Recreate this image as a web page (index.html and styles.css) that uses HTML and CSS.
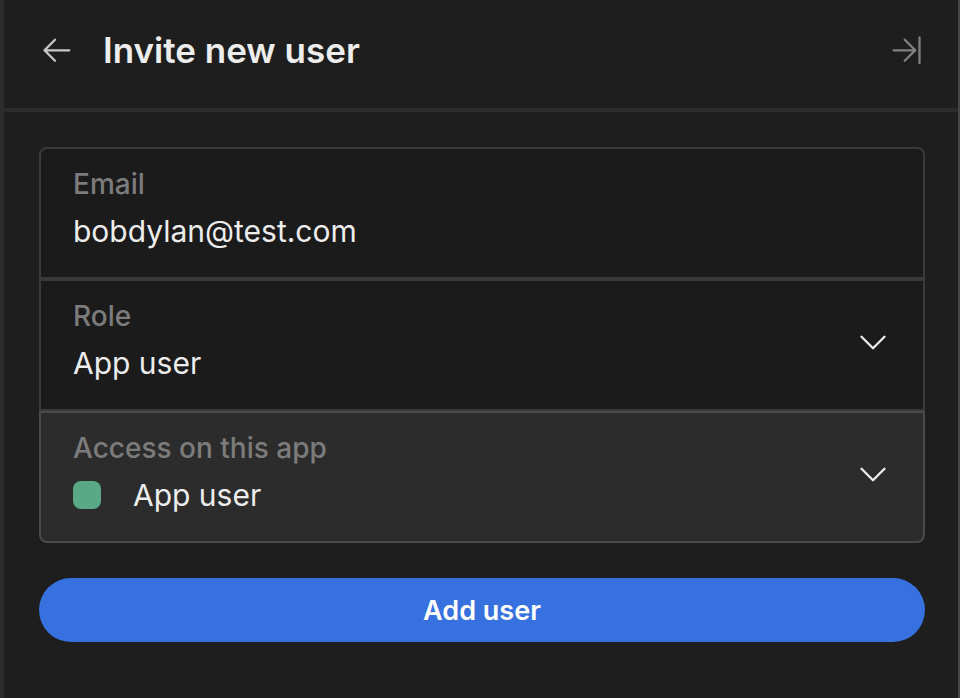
FILE: index.html
```html
<!DOCTYPE html>
<html lang="en">
<head>
    <meta charset="UTF-8">
    <meta name="viewport" content="width=device-width, initial-scale=1.0">
    <title>Invite new user</title>
    <link rel="stylesheet" href="styles.css">
</head>
<body>
    <header class="header">
        <button class="icon-button back" type="button" aria-label="Back">
            <svg width="32" height="32" viewBox="0 0 32 32">
                <path d="M28.3 16.3H3.5M14 5.8L3.5 16.3L14 26.8"/>
            </svg>
        </button>
        <h1>Invite new user</h1>
        <button class="icon-button collapse" type="button" aria-label="Close panel">
            <svg width="32" height="32" viewBox="0 0 32 32">
                <path d="M2.5 16.3H24.3M13.7 5.8L24.3 16.3L13.7 26.8M28.5 3.5V29"/>
            </svg>
        </button>
    </header>

    <form class="invite-form">
        <div class="fields">
            <div class="field">
                <label for="email">Email</label>
                <input type="email" id="email" value="bobdylan@test.com">
            </div>
            <div class="field">
                <label for="role">Role</label>
                <select id="role">
                    <option>App user</option>
                    <option>Creator</option>
                    <option>Admin</option>
                </select>
                <svg class="chevron" width="28" height="16" viewBox="0 0 28 16">
                    <path d="M2.5 1.7L14 13.2L25.5 1.7"/>
                </svg>
            </div>
            <div class="field active">
                <label for="access">Access on this app</label>
                <div class="access-row">
                    <span class="swatch"></span>
                    <select id="access">
                        <option>App user</option>
                        <option>No access</option>
                    </select>
                </div>
                <svg class="chevron" width="28" height="16" viewBox="0 0 28 16">
                    <path d="M2.5 1.7L14 13.2L25.5 1.7"/>
                </svg>
            </div>
        </div>
        <button class="submit" type="submit">Add user</button>
    </form>
</body>
</html>
```
FILE: styles.css
```css
* {
    box-sizing: border-box;
}
body {
    margin: 0;
    min-height: 100vh;
    background-color: #1e1e1e;
    border-left: 4px solid #2c2c2c;
    border-right: 2px solid #464646;
    color: #ededed;
    font-family: Inter, "Liberation Sans", sans-serif;
}
button, input, select {
    font-family: inherit;
}
.header {
    display: flex;
    align-items: center;
    padding: 28px 35px 36px;
    border-bottom: 4px solid #2c2c2c;
}
h1 {
    flex: 1;
    margin: 0 0 0 30px;
    font-size: 35px;
    font-weight: 600;
    line-height: 44px;
}
.icon-button {
    display: flex;
    padding: 0;
    border: none;
    background: none;
    cursor: pointer;
}
svg {
    fill: none;
    stroke: currentColor;
    stroke-width: 2.3;
    stroke-linecap: round;
    stroke-linejoin: round;
}
.back {
    margin-left: 2px;
    color: #c8c8c8;
}
.collapse {
    color: #808080;
}
.invite-form {
    padding: 35px 33px 35px 35px;
}
.field {
    position: relative;
    display: flex;
    flex-direction: column;
    gap: 11px;
    padding: 17px 32px 28px;
    background-color: #1b1b1b;
    border: 2px solid #3a3a3a;
}
.field:first-child {
    border-radius: 8px 8px 0 0;
}
.field:last-child {
    border-radius: 0 0 8px 8px;
}
.field.active {
    background-color: #2c2c2c;
    border-color: #4a4a4a;
}
.field label {
    color: #7c7c7c;
    font-size: 28px;
    font-weight: 500;
    line-height: 36px;
}
.field input, .field select {
    width: 100%;
    height: 36px;
    padding: 0;
    border: none;
    outline: none;
    background: none;
    color: #ededed;
    font-size: 30px;
    line-height: 36px;
    appearance: none;
}
.access-row {
    display: flex;
    align-items: center;
    gap: 32px;
}
.swatch {
    flex: none;
    width: 28px;
    height: 28px;
    border-radius: 8px;
    background-color: #5aa986;
}
.chevron {
    position: absolute;
    top: 54px;
    right: 36px;
    pointer-events: none;
}
.submit {
    display: block;
    width: 100%;
    height: 64px;
    margin-top: 35px;
    border: none;
    border-radius: 32px;
    background-color: #3671df;
    color: white;
    font-size: 27px;
    font-weight: 600;
    cursor: pointer;
}
```
